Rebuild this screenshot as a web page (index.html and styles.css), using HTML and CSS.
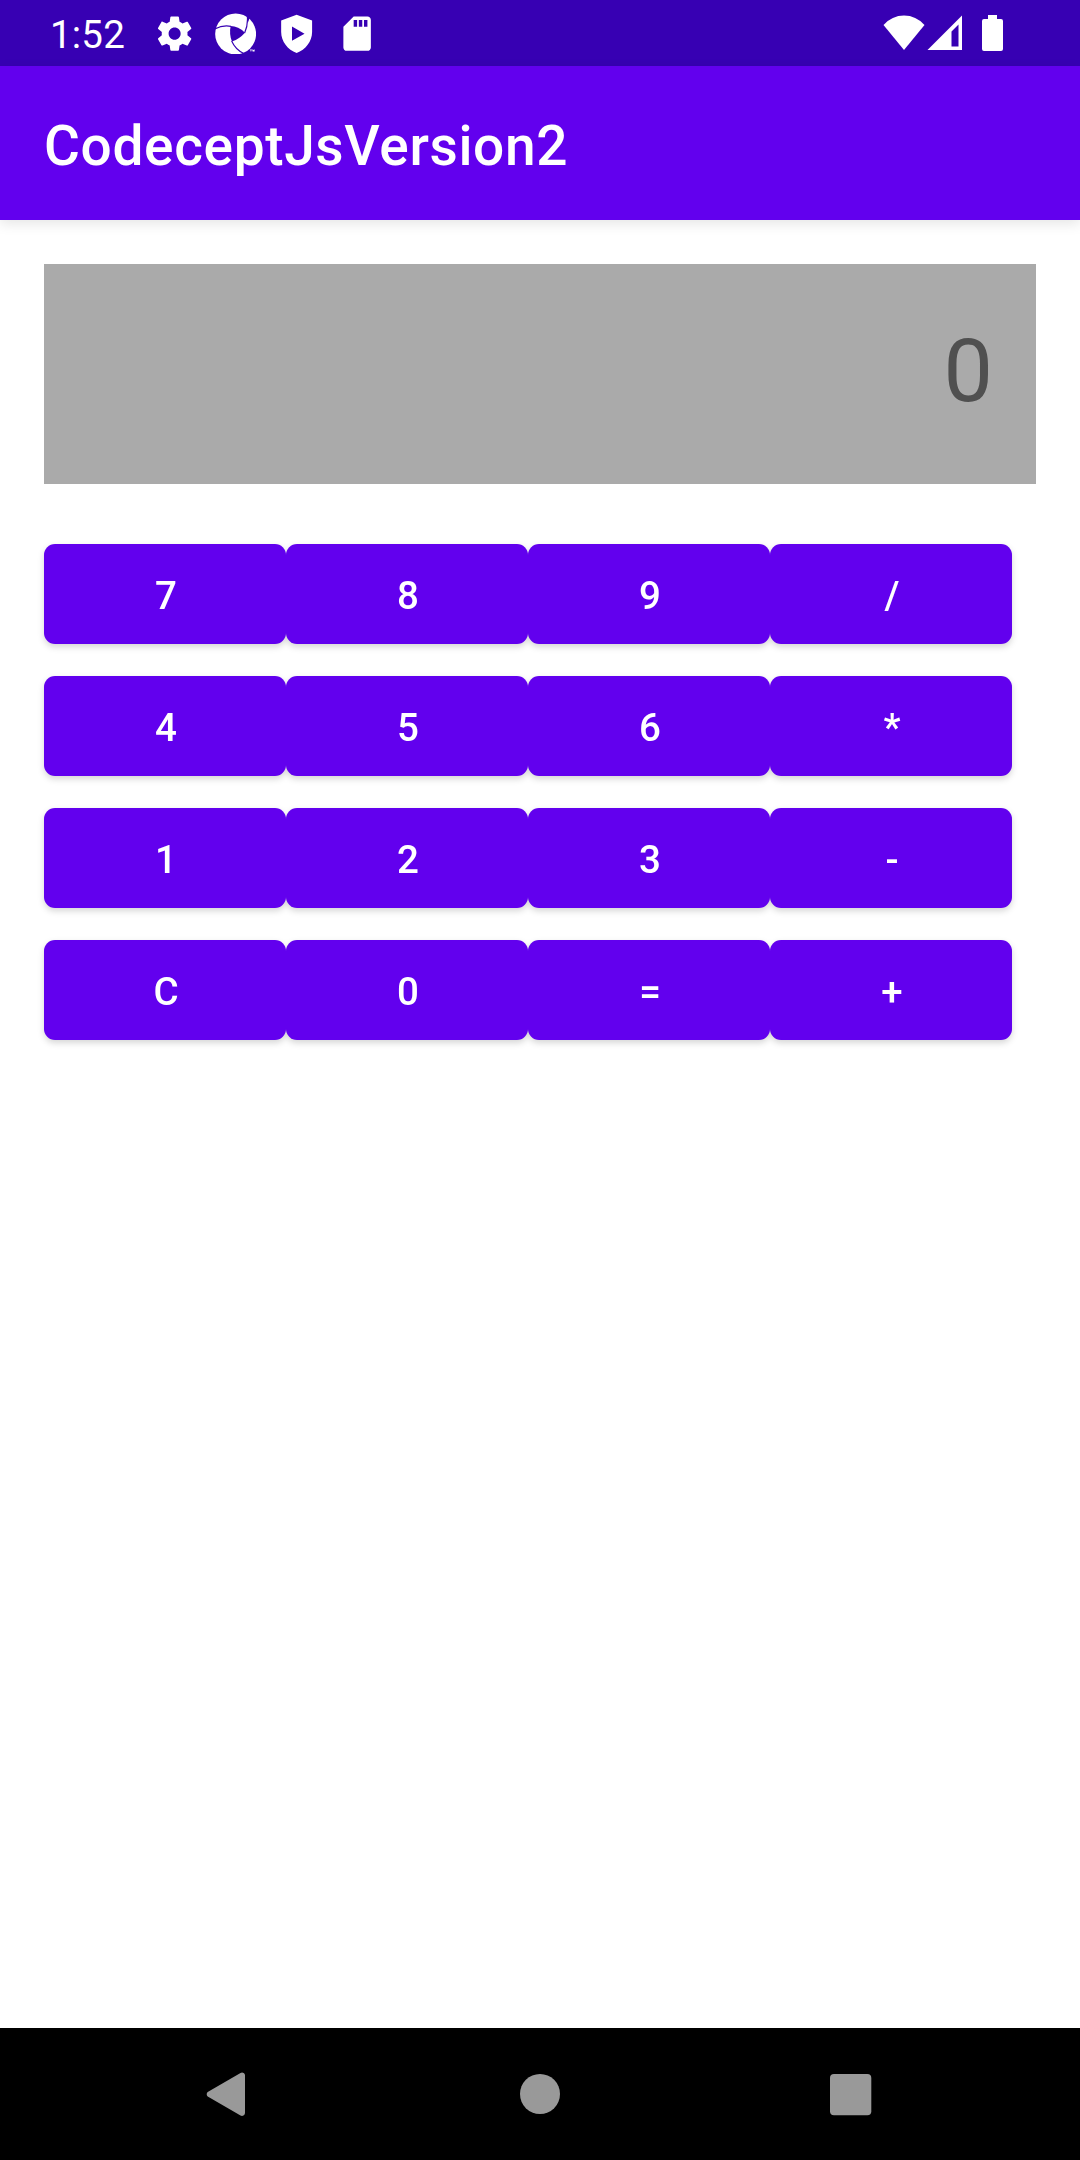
FILE: index.html
```html
<!DOCTYPE html>
<html lang="en">
<head>
<meta charset="utf-8">
<title>CodeceptJsVersion2</title>
<link rel="stylesheet" href="styles.css">
</head>
<body>
<div class="screen">
  <div class="status-bar">
    <span class="clock">1:52</span>
    <div class="notifications">
      <svg class="status-icon" viewBox="0 0 24 24"><path d="M19.43 12.98c.04-.32.07-.64.07-.98s-.03-.66-.07-.98l2.110-1.650c.19-.15.24-.42.12-.64l-2-3.460c-.12-.22-.39-.3-.61-.22l-2.490 1c-.52-.4-1.080-.73-1.690-.98l-.38-2.650C14.460 2.180 14.250 2 14 2h-4c-.25 0-.46.18-.49.42l-.38 2.650c-.61.25-1.170.59-1.690.98l-2.490-1c-.23-.09-.49 0-.61.22l-2 3.460c-.13.22-.07.49.12.64l2.110 1.650c-.04.32-.07.65-.07.98s.03.66.07.98l-2.110 1.650c-.19.15-.24.42-.12.64l2 3.460c.12.22.39.3.61.22l2.490-1c.52.4 1.080.73 1.690.98l.38 2.650c.03.24.24.42.49.42h4c.25 0 .46-.18.49-.42l.38-2.650c.61-.25 1.170-.59 1.690-.98l2.490 1c.23.09.49 0 .61-.22l2-3.460c.12-.22.07-.49-.12-.64zM12 15.500c-1.930 0-3.500-1.570-3.500-3.500s1.570-3.500 3.500-3.500 3.500 1.570 3.500 3.500-1.570 3.500-3.500 3.500z"/></svg>
      <svg class="status-icon" viewBox="44 37 124 124">
        <circle cx="106" cy="100" r="61.5"/>
        <path class="cut" d="M91 76Q114 76 134 96Q118 114 95 123Q86 100 91 76Z"/>
        <path class="slit" d="M42 86Q66 72 92 77M133 97Q144 74 141 44M94 121Q106 148 133 160"/>
        <path class="cut" d="M139 40L148 46L146 58L142 68Z"/>
        <path d="M149 147h6v2h-2v4h-2v-4h-2zM156 147h2l1.500 2 1.500-2h2v6h-6z"/>
      </svg>
      <svg class="status-icon" viewBox="0 0 24 24"><path fill-rule="evenodd" d="M12 1L3 4.400V11c0 5.500 3.800 10.400 9 12.200 5.200-1.800 9-6.700 9-12.200V4.400zM9.300 7.900l7.300 4.100-7.300 4.100z"/></svg>
      <svg class="status-icon" viewBox="0.3 0 24 24"><path d="M18 2h-8L4.020 8 4 20c0 1.100.9 2 2 2h12c1.100 0 2-.9 2-2V4c0-1.100-.9-2-2-2zm-6 6h-2V4h2v4zm3 0h-2V4h2v4zm3 0h-2V4h2v4z"/></svg>
    </div>
    <div class="system">
      <svg class="wifi" viewBox="0 0 42 36"><path d="M.500 10Q9 .5 21 .5T41.500 10L21 35z"/></svg>
      <svg class="signal" viewBox="0 0 36 36"><path fill-rule="evenodd" d="M.500 35H35V.500zM24.500 16.500V31.500H31.500V9.500z"/></svg>
      <svg class="battery" viewBox="0 0 21 36"><path d="M6 0h9v4h4a2 2 0 0 1 2 2v28a2 2 0 0 1-2 2H2a2 2 0 0 1-2-2V6a2 2 0 0 1 2-2h4z"/></svg>
    </div>
  </div>
  <header class="app-bar"><h1 class="title">CodeceptJsVersion2</h1></header>
  <main class="content">
    <div class="display">0</div>
    <div class="keypad">
      <button class="key">7</button><button class="key">8</button><button class="key">9</button><button class="key">/</button>
      <button class="key">4</button><button class="key">5</button><button class="key">6</button><button class="key">*</button>
      <button class="key">1</button><button class="key">2</button><button class="key">3</button><button class="key">-</button>
      <button class="key">C</button><button class="key">0</button><button class="key">=</button><button class="key">+</button>
    </div>
  </main>
  <nav class="nav-bar">
    <svg class="nav-icon" viewBox="0 0 46 46"><path d="M39 5v37a3 3 0 0 1-4.500 2.500L1.700 25.500a3 3 0 0 1 0-4.500L34.500 2A3 3 0 0 1 39 5z"/></svg>
    <svg class="nav-icon" viewBox="0 0 46 46"><circle cx="23" cy="23" r="20"/></svg>
    <svg class="nav-icon" viewBox="0 0 46 46"><rect x="2" y="3" width="41.300" height="41.300" rx="4"/></svg>
  </nav>
</div>
</body>
</html>
```
FILE: styles.css
```css
* { box-sizing: border-box; }
body { margin: 0; font-family: Roboto, "Liberation Sans", sans-serif; background: #fff; }
svg { display: block; fill: #fff; flex: none; }
.screen { width: 1080px; height: 2160px; display: flex; flex-direction: column; }

.status-bar { height: 66px; background: #3700b3; display: flex; align-items: center; padding: 0 77px 0 50px; }
.clock { width: 104px; font-size: 38.5px; line-height: 66px; padding-top: 3px; letter-spacing: .2px; color: #fff; }
.notifications { display: flex; gap: 19.75px; padding-top: 1px; }
.status-icon { width: 41.25px; height: 41.25px; }
.cut { fill: #3700b3; }
.slit { fill: none; stroke: #3700b3; stroke-width: 3.5; }
.system { display: flex; margin-left: auto; }
.wifi { width: 42px; height: 36px; }
.signal { width: 36px; height: 36px; margin-left: 2px; }
.battery { width: 21px; height: 36px; margin-left: 19px; }

.app-bar { height: 154px; background: #6200ee; display: flex; align-items: center; padding: 6px 44px 0; box-shadow: 0 4px 12px rgba(0, 0, 0, .1); }
.title { margin: 0; font-size: 55px; font-weight: 500; line-height: 66px; letter-spacing: .65px; color: #fff; }

.content { flex: 1; padding: 44px; }
.display { height: 220px; background: #aaa; color: #505050; font-size: 88px; line-height: 214px; padding-right: 43px; text-align: right; }
.keypad { display: grid; grid-template-columns: repeat(4, 242px); grid-auto-rows: 100px; row-gap: 32px; margin-top: 60px; filter: drop-shadow(0 3px 3px rgba(0, 0, 0, .16)); }
.key { border: 0; padding: 3px 0 0 2px; border-radius: 11px; background: #6200ee; color: #fff; font: 500 38.5px/45px Roboto, "Liberation Sans", sans-serif; }

.nav-bar { height: 132px; background: #000; display: flex; align-items: center; justify-content: space-between; padding: 0 206px; }
.nav-icon { width: 46px; height: 46px; fill: #999; }
```
